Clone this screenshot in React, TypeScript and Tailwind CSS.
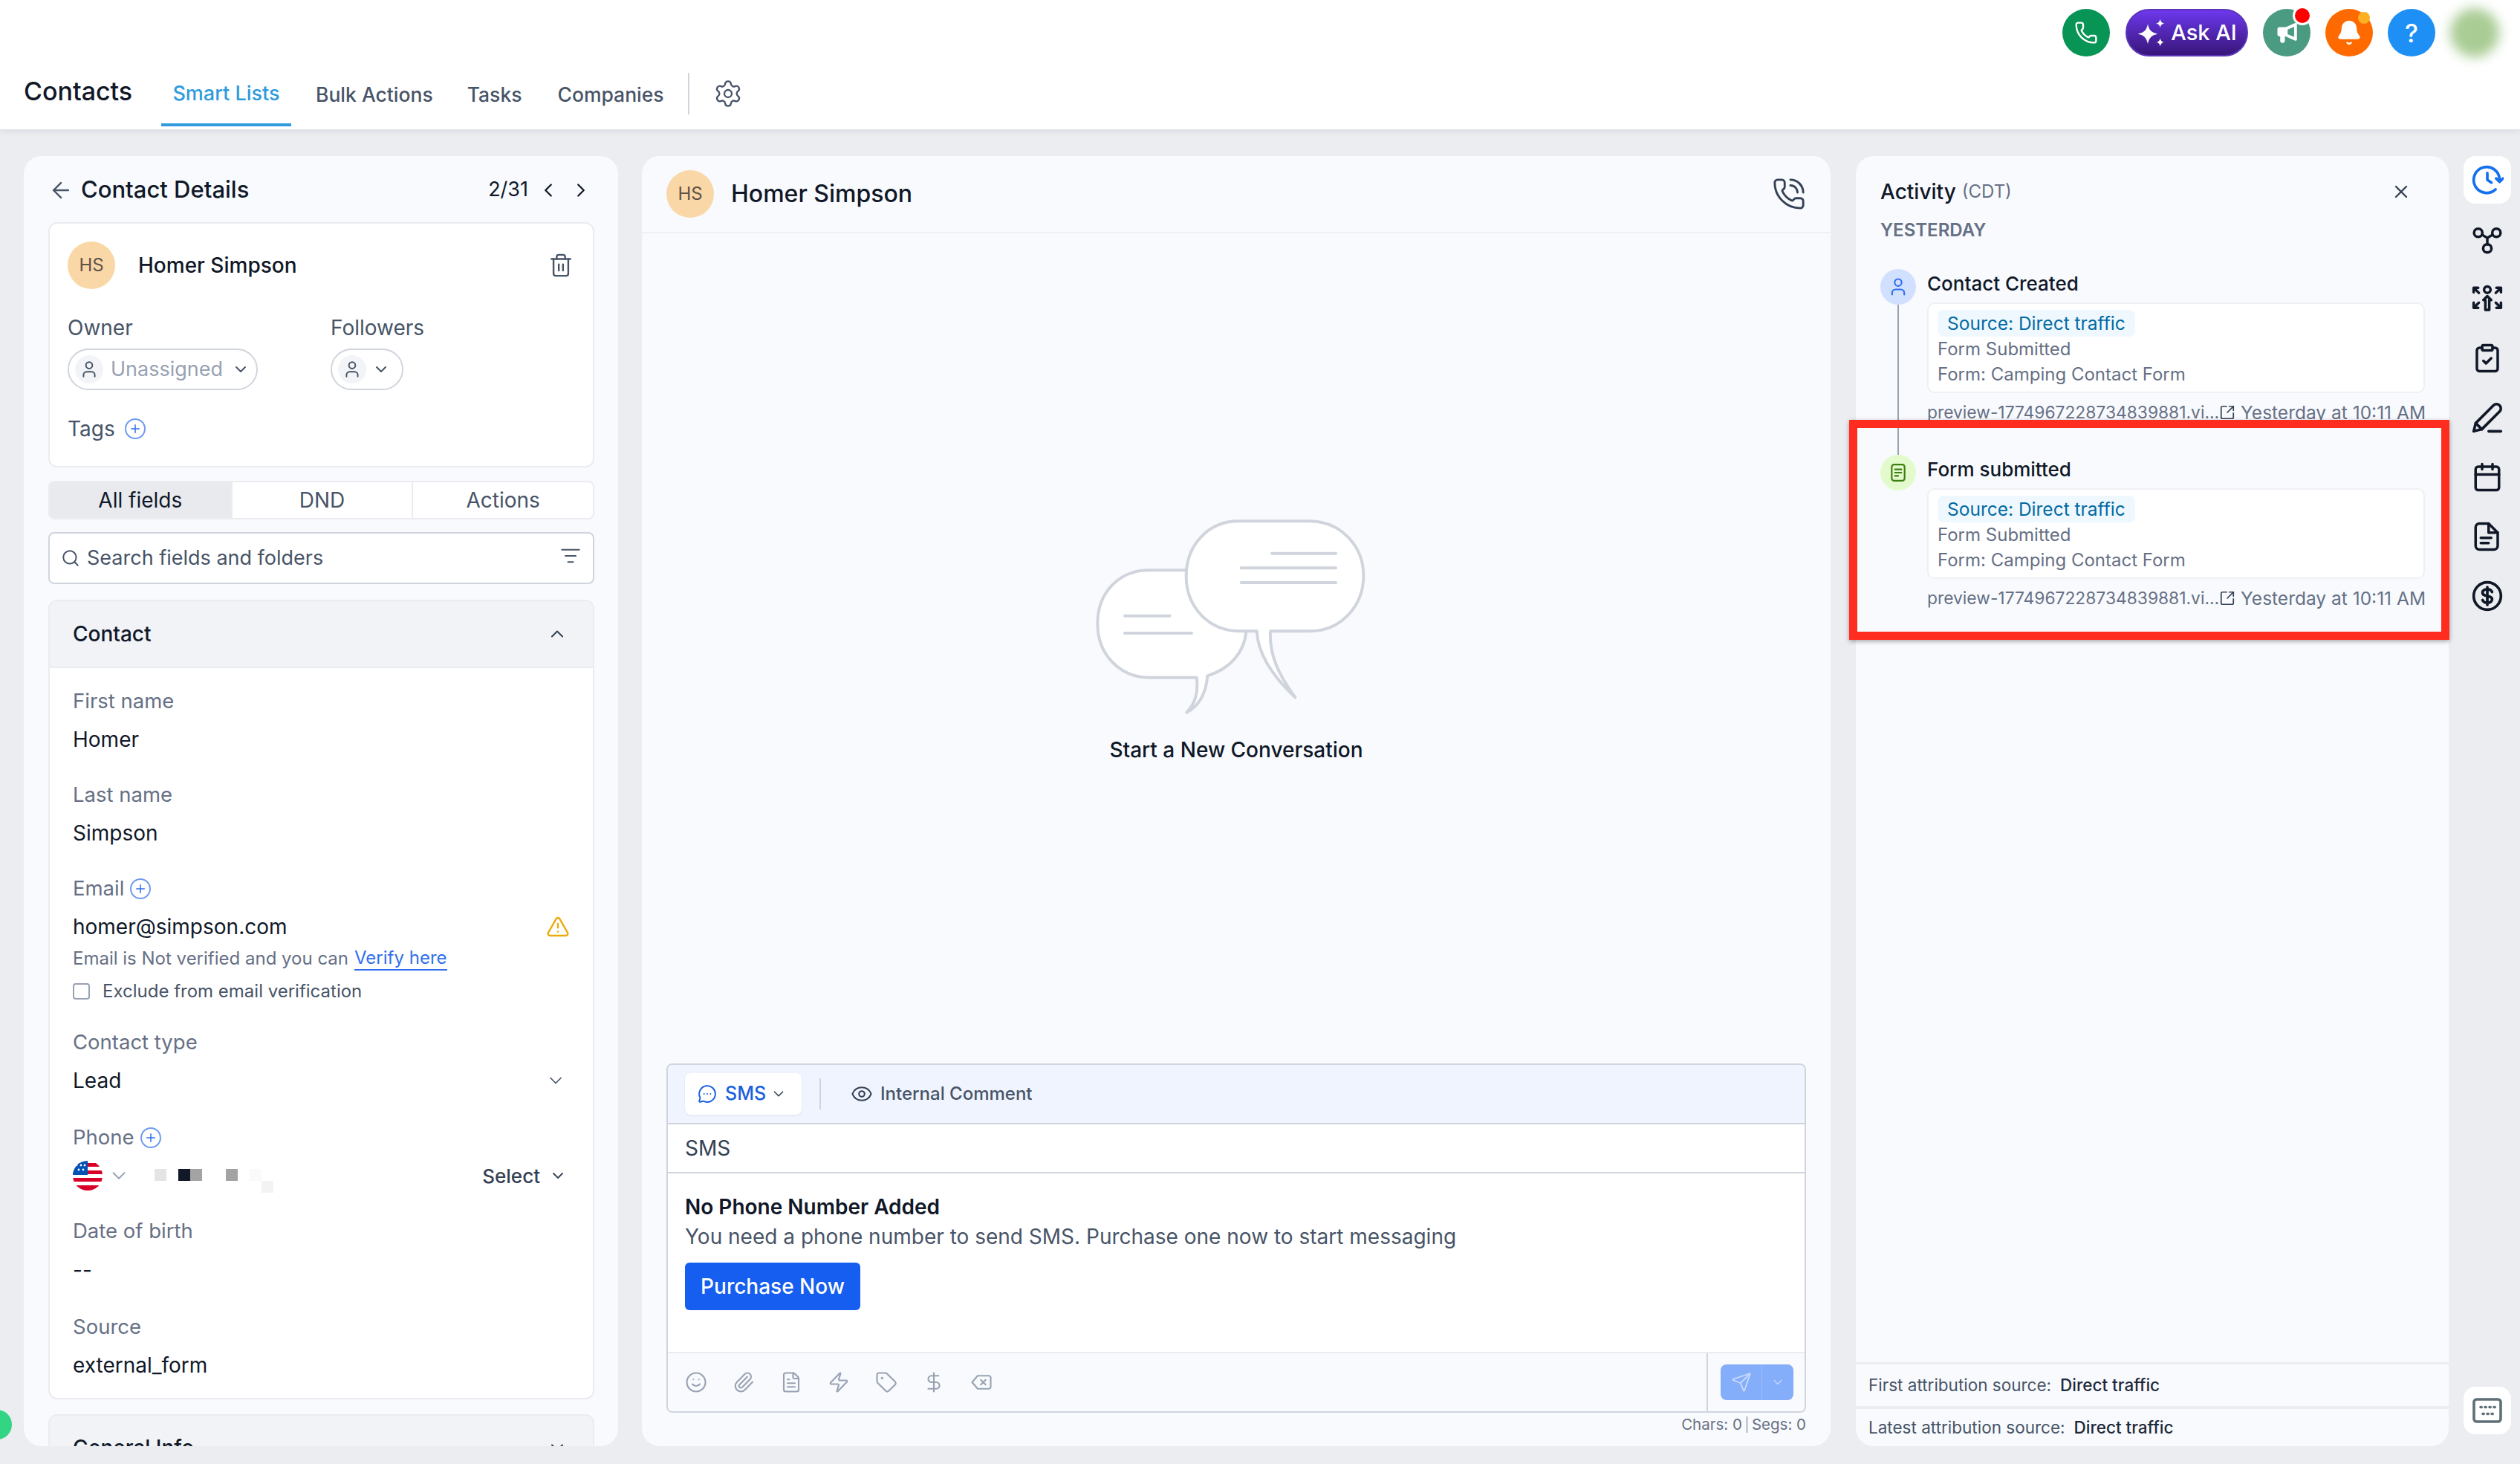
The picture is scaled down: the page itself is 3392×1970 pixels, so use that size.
import React from "react";
import {
  ArrowLeft,
  Bell,
  Calendar,
  ChevronDown,
  ChevronLeft,
  ChevronRight,
  ChevronUp,
  ClipboardCheck,
  DollarSign,
  Eye,
  FileText,
  ListFilter,
  MessageCircleMore,
  Paperclip,
  Phone,
  PhoneCall,
  Plus,
  Search,
  Send,
  Settings,
  Smile,
  SquareArrowOutUpRight,
  Tag,
  Trash2,
  TriangleAlert,
  User,
  X,
  Zap,
} from "lucide-react";

function PlusBadge() {
  return (
    <span className="flex h-[28px] w-[28px] items-center justify-center rounded-full border-2 border-[#6f9bf0] text-[#2f6fed]">
      <Plus size={18} strokeWidth={2} />
    </span>
  );
}

function Label({ children, className = "" }: { children: React.ReactNode; className?: string }) {
  return <div className={`flex h-[40px] items-center gap-[8px] text-[27.500px] text-[#667085] ${className}`}>{children}</div>;
}

function Value({ children, className = "" }: { children: React.ReactNode; className?: string }) {
  return <div className={`flex h-[40px] items-center text-[28px] text-[#101828] ${className}`}>{children}</div>;
}

function Activity({ icon, title, line }: { icon: React.ReactNode; title: string; line?: boolean }) {
  return (
    <div className="flex h-[250px] gap-[15px]">
      <div className="flex w-[48px] flex-col items-center">
        {icon}
        {line && <div className="w-[2px] flex-1 bg-[#98a2b3]" />}
      </div>
      <div className="w-[670px]">
        <div className="flex h-[38px] items-center text-[26px] font-medium text-[#101828]">{title}</div>
        <div className="mt-[7px] h-[122px] rounded-[10px] border-2 border-[#eef0f4] bg-white pl-[12px] pt-[8px] text-[24px] text-[#667085]">
          <div className="flex h-[36px] w-[266px] items-center rounded-[8px] bg-[#eff8ff] pl-[13px] text-[24.500px] text-[#026aa2]">Source: Direct traffic</div>
          <div className="flex h-[34px] items-center">Form Submitted</div>
          <div className="flex h-[34px] items-center">Form: Camping Contact Form</div>
        </div>
        <div className="mt-[6px] flex h-[40px] items-center justify-between whitespace-nowrap text-[#667085]">
          <span className="text-[22.800px]">preview-1774967228734839881.vi...</span>
          <span className="flex items-center gap-[7px] text-[24.500px]">
            <SquareArrowOutUpRight size={22} strokeWidth={1.9} className="text-[#344054]" />
            Yesterday at 10:11 AM
          </span>
        </div>
      </div>
    </div>
  );
}

function RailIcon({ children, active }: { children: React.ReactNode; active?: boolean }) {
  return (
    <div className={`flex h-[64px] w-[64px] items-center justify-center rounded-[16px] ${active ? "bg-white text-[#1570ef]" : "text-[#101828]"}`}>
      {children}
    </div>
  );
}

function UsFlag() {
  return (
    <svg width="40" height="40" viewBox="0 0 40 40">
      <defs>
        <clipPath id="flag">
          <circle cx="20" cy="20" r="20" />
        </clipPath>
      </defs>
      <g clipPath="url(#flag)">
        <rect width="40" height="40" fill="#fff" />
        <rect y="3" width="40" height="5" fill="#d80027" />
        <rect y="13" width="40" height="5" fill="#d80027" />
        <rect y="23" width="40" height="5" fill="#d80027" />
        <rect y="33" width="40" height="7" fill="#d80027" />
        <rect width="20" height="19" fill="#0052b4" />
        <circle cx="5" cy="6" r="1.4" fill="#fff" />
        <circle cx="11" cy="6" r="1.4" fill="#fff" />
        <circle cx="16" cy="6" r="1.4" fill="#fff" />
        <circle cx="8" cy="12" r="1.4" fill="#fff" />
        <circle cx="14" cy="12" r="1.4" fill="#fff" />
      </g>
    </svg>
  );
}

function ChatArt() {
  return (
    <svg width="500" height="340" viewBox="0 0 1500 1020" fill="none" className="mr-[28px]">
      <g stroke="#d0d5dd" strokeWidth="12" strokeLinecap="round" strokeLinejoin="round">
        <path
          d="M590 262H440C320 262 232 350 232 478C232 610 330 695 440 695H632C640 760 625 800 592 836C640 810 670 760 676 688C770 660 825 590 832 510"
          fill="#fff"
        />
        <path
          d="M800 64H1090C1210 64 1306 160 1306 285C1306 410 1210 508 1090 508H930C925 600 960 680 1030 775C950 700 880 610 875 508H810C680 508 590 410 590 285C590 160 680 64 800 64Z"
          fill="#fff"
        />
        <path d="M936 194H1194M812 253H1194M812 312H1194M342 446H524M342 516H612" />
      </g>
    </svg>
  );
}

export default function App() {
  return (
    <div className="relative h-[1970px] w-[3392px] overflow-hidden bg-[#ebedf1] font-['Inter',sans-serif]">
      {/* Header */}
      <div className="relative h-[174px] bg-white shadow-[0_3px_8px_rgba(16,24,40,0.08)]">
        <div className="flex h-[88px] items-center justify-end pr-[28px]">
          <div className="flex h-[64px] w-[64px] items-center justify-center rounded-full bg-[#079455] text-white">
            <Phone size={32} strokeWidth={1.8} />
          </div>
          <div className="ml-[21px] flex h-[64px] w-[165px] items-center justify-center gap-[6px] rounded-full border-2 border-[#5b34b8] bg-gradient-to-b from-[#6d38ee] to-[#38167a] text-[29px] font-medium text-white">
            <svg width="40" height="42" viewBox="0 0 24 24" fill="#fff">
              <path d="M9 5C10 10 12 12 17 13C12 14 10 16 9 21C8 16 6 14 1 13C6 12 8 10 9 5Z" />
              <path d="M19 1C19.5 3.2 20.4 4.1 22.5 4.5C20.4 5 19.5 5.800 19 8C18.500 5.800 17.600 5 15.500 4.500C17.600 4.100 18.500 3.200 19 1Z" />
              <path d="M19 16.500C19.500 18.500 20.300 19.300 22 19.700C20.300 20.200 19.500 21 19 23C18.500 21 17.700 20.200 16 19.700C17.700 19.300 18.500 18.500 19 16.500Z" />
            </svg>
            Ask AI
          </div>
          <div className="relative ml-[20px] flex h-[64px] w-[64px] items-center justify-center rounded-full bg-[#4b9a82] text-white">
            <svg width="30" height="30" viewBox="0 0 24 24" fill="#fff" fillRule="evenodd">
              <path d="M2 8C2 7 3 6 4 6H11L21 1.500C22 1 23 1.800 23 3V19C23 20.200 22 21 21 20.500L11 16H10V21C10 22 9 23 8 23H7C6 23 5 22 5 21V16H4C3 16 2 15 2 14ZM13 8.500V13.500L20 16.500V5.500Z" />
            </svg>
            <span className="absolute right-[-2px] top-[-4px] h-[26px] w-[26px] rounded-full border-[3px] border-white bg-[#f00]" />
          </div>
          <div className="relative ml-[20px] flex h-[64px] w-[64px] items-center justify-center rounded-full bg-[#ff6a00] text-white">
            <Bell size={36} fill="#fff" strokeWidth={1.6} />
            <span className="absolute right-[4px] top-[4px] h-[16px] w-[16px] rounded-full bg-[#fdb022]" />
          </div>
          <div className="ml-[20px] flex h-[64px] w-[64px] items-center justify-center rounded-full bg-[#1d8ff5] text-[34px] font-medium text-white">?</div>
          <div className="ml-[20px] h-[66px] w-[66px] rounded-full bg-[#a9cc94] blur-[8px]" />
        </div>
        <div className="flex h-[86px] items-start pl-[32px]">
          <div className="mt-[14px] w-[185px] text-[34px] font-medium leading-[42px] text-[#101828]">Contacts</div>
          <div className="flex h-[82px] w-[175px] justify-center border-b-4 border-[#2f9bdc] pt-[19px] text-[27px] font-medium leading-[38px] text-[#2f9bdc]">Smart Lists</div>
          <div className="ml-[33px] mt-[18px] text-[26.500px] font-medium leading-[42px] text-[#475467]">Bulk Actions</div>
          <div className="ml-[46px] mt-[18px] text-[26.500px] font-medium leading-[42px] text-[#475467]">Tasks</div>
          <div className="ml-[48px] mt-[18px] text-[26.500px] font-medium leading-[42px] text-[#475467]">Companies</div>
          <div className="ml-[32px] mt-[10px] h-[56px] w-[2px] bg-[#d0d5dd]" />
          <Settings size={40} strokeWidth={1.4} className="ml-[32px] mt-[18px] text-[#475467]" />
        </div>
      </div>

      {/* Panels */}
      <div className="flex pl-[32px] pt-[36px]">
        {/* Contact details */}
        <div className="h-[1736px] w-[800px] overflow-hidden rounded-[24px] bg-[#f8fafd] px-[33px]">
          <div className="flex h-[89px] items-center pt-[2px] text-[#101828]">
            <ArrowLeft size={34} strokeWidth={1.7} className="text-[#475467]" />
            <span className="ml-[10px] text-[31px] font-medium">Contact Details</span>
            <span className="ml-auto text-[27px]">2/31</span>
            <ChevronLeft size={30} strokeWidth={1.8} className="ml-[12px]" />
            <ChevronRight size={30} strokeWidth={1.8} className="ml-[14px] mr-[2px]" />
          </div>
          <div className="h-[330px] w-[735px] rounded-[12px] border-2 border-[#eaecf0] bg-white pl-[24px] pr-[26px] pt-[24px]">
            <div className="flex h-[64px] items-center">
              <div className="flex h-[64px] w-[64px] items-center justify-center rounded-full bg-[#fad7a6] text-[24px] text-[#5d5348]">HS</div>
              <span className="ml-[31px] text-[28px] font-medium text-[#101828]">Homer Simpson</span>
              <Trash2 size={34} strokeWidth={1.7} className="ml-auto text-[#475467]" />
            </div>
            <div className="mt-[32px] flex">
              <div className="w-[354px]">
                <div className="flex h-[40px] items-center text-[28px] text-[#475467]">Owner</div>
                <div className="mt-[8px] flex h-[56px] w-[256px] items-center rounded-full border-2 border-[#d0d5dd] pl-[8px]">
                  <span className="flex h-[38px] w-[38px] items-center justify-center rounded-full bg-[#f2f4f7]">
                    <User size={26} strokeWidth={1.8} className="text-[#475467]" />
                  </span>
                  <span className="ml-[10px] text-[27px] text-[#98a2b3]">Unassigned</span>
                  <ChevronDown size={24} strokeWidth={2} className="ml-[12px] text-[#475467]" />
                </div>
              </div>
              <div>
                <div className="flex h-[40px] items-center text-[28px] text-[#475467]">Followers</div>
                <div className="mt-[8px] flex h-[56px] w-[98px] items-center rounded-full border-2 border-[#d0d5dd] pl-[8px]">
                  <span className="flex h-[38px] w-[38px] items-center justify-center rounded-full bg-[#f2f4f7]">
                    <User size={26} strokeWidth={1.8} className="text-[#475467]" />
                  </span>
                  <ChevronDown size={24} strokeWidth={2} className="ml-[8px] text-[#475467]" />
                </div>
              </div>
            </div>
            <div className="mt-[32px] flex h-[40px] items-center gap-[13px] text-[28px] text-[#475467]">
              Tags <PlusBadge />
            </div>
          </div>

          <div className="mt-[18px] grid h-[52px] w-[735px] grid-cols-3 overflow-hidden rounded-[8px] border-2 border-[#eaecf0] bg-white text-center text-[28px] font-normal leading-[48px] text-[#475467]">
            <div className="bg-[#e8eaee] text-[#101828]">All fields</div>
            <div className="border-l-2 border-[#eaecf0]">DND</div>
            <div className="border-l-2 border-[#eaecf0]">Actions</div>
          </div>

          <div className="mt-[17px] flex h-[70px] w-[735px] items-center rounded-[8px] border-2 border-[#d0d5dd] bg-white pl-[15px] pr-[16px] text-[27px] text-[#475467]">
            <Search size={26} strokeWidth={1.8} />
            <span className="ml-[9px]">Search fields and folders</span>
            <ListFilter size={28} strokeWidth={1.7} className="ml-auto mb-[6px]" />
          </div>

          <div className="mt-[21px] h-[1076px] w-[735px] overflow-hidden rounded-[12px] border-2 border-[#eaecf0] bg-white">
            <div className="flex h-[90px] items-center justify-between border-b-2 border-[#eaecf0] bg-[#f1f3f7] pl-[31px] pr-[34px] text-[28px] font-medium text-[#101828]">
              Contact
              <ChevronUp size={28} strokeWidth={1.8} className="text-[#344054]" />
            </div>
            <div className="px-[31px] pt-[25px]">
              <Label>First name</Label>
              <Value className="mt-[11px]">Homer</Value>
              <Label className="mt-[35px]">Last name</Label>
              <Value className="mt-[11px]">Simpson</Value>
              <Label className="mt-[35px]">
                Email <PlusBadge />
              </Label>
              <Value className="mt-[11px] justify-between">
                homer@simpson.com
                <TriangleAlert size={32} strokeWidth={1.8} className="text-[#eaaa08]" />
              </Value>
              <div className="mt-[3px] flex h-[40px] items-center text-[24px] text-[#667085]">
                Email is Not verified and you can
                <span className="ml-[8px] border-b-2 border-[#2f6fed] leading-[30px] text-[#2f6fed]">Verify here</span>
              </div>
              <div className="mt-[4px] flex h-[40px] items-center text-[24px] text-[#475467]">
                <span className="h-[22px] w-[23px] rounded-[4px] border-2 border-[#98a2b3] bg-white" />
                <span className="ml-[17px]">Exclude from email verification</span>
              </div>
              <Label className="mt-[29px]">Contact type</Label>
              <Value className="mt-[11px] justify-between">
                Lead
                <ChevronDown size={28} strokeWidth={1.5} className="mr-[5px] text-[#475467]" />
              </Value>
              <Label className="mt-[37px]">
                Phone <PlusBadge />
              </Label>
              <div className="mt-[11px] flex h-[40px] items-center text-[26px] text-[#344054]">
                <UsFlag />
                <ChevronDown size={30} strokeWidth={1.5} className="ml-[7px] text-[#98a2b3]" />
                <svg width="176" height="44" viewBox="0 0 176 44" className="ml-[33px] mt-[4px]">
                  <rect x="0" y="11" width="16" height="16" fill="#e4e4e7" />
                  <rect x="32" y="11" width="16" height="16" fill="#111827" />
                  <rect x="48" y="11" width="16" height="16" fill="#a3a3a3" />
                  <rect x="96" y="11" width="16" height="16" fill="#a3a3a3" />
                  <rect x="128" y="11" width="16" height="16" fill="#fafafa" />
                  <rect x="144" y="27" width="16" height="16" fill="#f3f3f3" />
                </svg>
                <span className="ml-auto font-medium">Select</span>
                <ChevronDown size={24} strokeWidth={1.8} className="ml-[12px] mr-[4px]" />
              </div>
              <Label className="mt-[35px]">Date of birth</Label>
              <Value className="mt-[12px]">--</Value>
              <Label className="mt-[37px]">Source</Label>
              <Value className="mt-[11px]">external_form</Value>
            </div>
          </div>

          <div className="mt-[20px] flex h-[90px] w-[735px] items-center justify-between rounded-[12px] border-2 border-[#eaecf0] bg-[#f1f3f7] pl-[31px] pr-[34px] text-[28px] font-medium text-[#101828]">
            General Info
            <ChevronDown size={28} strokeWidth={1.8} className="text-[#344054]" />
          </div>
        </div>

        {/* Conversation */}
        <div className="ml-[32px] flex h-[1736px] w-[1600px] flex-col rounded-[24px] bg-[#f8fafd]">
          <div className="flex h-[104px] items-center border-b-2 border-[#eef0f4] pl-[33px] pr-[33px]">
            <div className="flex h-[64px] w-[64px] items-center justify-center rounded-full bg-[#fad7a6] text-[24px] text-[#5d5348]">HS</div>
            <span className="ml-[23px] text-[32px] font-medium text-[#101828]">Homer Simpson</span>
            <PhoneCall size={46} strokeWidth={1.5} className="ml-auto text-[#344054]" />
          </div>
          <div className="flex flex-1 flex-col items-center pt-[366px]">
            <ChatArt />
            <div className="mt-[-31px] text-[28px] font-medium leading-[40px] text-[#101828]">Start a New Conversation</div>
          </div>
          <div className="ml-[33px] h-[470px] w-[1534px] overflow-hidden rounded-[8px] border-2 border-[#d0d5dd]">
            <div className="flex h-[80px] items-center border-b-2 border-[#d0d5dd] bg-[#eff4fe] pl-[23px]">
              <div className="flex h-[56px] w-[157px] items-center rounded-[8px] bg-white pl-[17px] text-[25px] font-medium text-[#1b5fe0] shadow-[0_1px_3px_rgba(16,24,40,0.08)]">
                <MessageCircleMore size={26} strokeWidth={1.8} />
                <span className="ml-[11px]">SMS</span>
                <ChevronDown size={22} strokeWidth={1.8} className="ml-[6px] text-[#344054]" />
              </div>
              <div className="ml-[24px] h-[42px] w-[2px] bg-[#d0d5dd]" />
              <Eye size={30} strokeWidth={1.7} className="ml-[40px] text-[#344054]" />
              <span className="ml-[10px] text-[24px] font-medium text-[#475467]">Internal Comment</span>
            </div>
            <div className="flex h-[66px] items-center border-b-2 border-[#d0d5dd] bg-white pl-[23px] text-[28px] text-[#344054]">SMS</div>
            <div className="h-[242px] border-b-2 border-[#eaecf0] bg-white pl-[23px] pt-[25px]">
              <div className="text-[28px] font-semibold leading-[40px] text-[#101828]">No Phone Number Added</div>
              <div className="text-[28px] leading-[40px] text-[#475467]">You need a phone number to send SMS. Purchase one now to start messaging</div>
              <div className="mt-[15px] flex h-[64px] w-[236px] items-center justify-center rounded-[6px] bg-[#155eef] text-[28px] font-medium text-white">Purchase Now</div>
            </div>
            <div className="flex h-[78px] items-center bg-[#f8fafd] pl-[23px] text-[#98a2b3]">
              <div className="flex gap-[34px]">
                <Smile size={30} strokeWidth={1.7} />
                <Paperclip size={30} strokeWidth={1.7} />
                <FileText size={30} strokeWidth={1.7} />
                <Zap size={30} strokeWidth={1.7} />
                <Tag size={30} strokeWidth={1.7} />
                <DollarSign size={30} strokeWidth={1.7} />
                <svg width="30" height="30" viewBox="0 0 24 24" fill="none" stroke="currentColor" strokeWidth="1.7" strokeLinejoin="round">
                  <path d="M8 5H20C21 5 22 6 22 7V17C22 18 21 19 20 19H8L2 12Z" />
                  <path d="M11 9L17 15M17 9L11 15" />
                </svg>
              </div>
              <div className="ml-auto flex h-full w-[132px] items-center border-l-2 border-[#d0d5dd] pl-[17px]">
                <div className="flex h-[48px] w-[98px] items-center rounded-[8px] bg-[#84adfa] text-white">
                  <span className="flex h-full w-[56px] items-center justify-center border-r border-[#9dbefb]">
                    <Send size={28} strokeWidth={1.6} className="text-[#c6d9fd]" />
                  </span>
                  <ChevronDown size={20} strokeWidth={1.6} className="ml-[11px] text-[#c6d9fd]" />
                </div>
              </div>
            </div>
          </div>
          <div className="mb-[13px] mr-[33px] flex h-[32px] items-center justify-end text-[20.500px] text-[#667085]">
            Chars: 0 <span className="mx-[6px] h-[22px] w-[1px] bg-[#667085]" /> Segs: 0
          </div>
        </div>

        {/* Activity */}
        <div className="ml-[34px] flex h-[1736px] w-[798px] flex-col rounded-[24px] bg-[#f8fafd]">
          <div className="pl-[33px]">
            <div className="flex h-[96px] items-center pr-[50px]">
              <span className="text-[28px] font-medium text-[#101828]">Activity</span>
              <span className="ml-[8px] text-[24px] text-[#667085]">(CDT)</span>
              <X size={28} strokeWidth={2} className="ml-auto text-[#344054]" />
            </div>
            <div className="flex h-[8px] items-center text-[24px] font-semibold text-[#667085]">YESTERDAY</div>
            <div className="mt-[48px]">
              <Activity
                title="Contact Created"
                line
                icon={
                  <span className="flex h-[48px] w-[48px] items-center justify-center rounded-full bg-[#d1e0ff] text-[#2f6fed]">
                    <User size={28} strokeWidth={1.8} />
                  </span>
                }
              />
              <Activity
                title="Form submitted"
                icon={
                  <span className="flex h-[48px] w-[48px] items-center justify-center rounded-full bg-[#e3fbcc] text-[#3f7d12]">
                    <svg width="26" height="26" viewBox="0 0 24 24" fill="none" stroke="currentColor" strokeWidth="2" strokeLinecap="round">
                      <rect x="4" y="2" width="16" height="20" rx="3" />
                      <path d="M8 8H16M8 12H16M8 16H12" />
                    </svg>
                  </span>
                }
              />
            </div>
          </div>
          <div className="mt-auto flex h-[59px] items-center border-t-[3px] border-[#ebedf1] pl-[17px] text-[22.500px] text-[#475467]">
            First attribution source:
            <span className="ml-[12px] font-medium text-[#1d2939]">Direct traffic</span>
          </div>
          <div className="flex h-[54px] items-center border-t-[4px] border-[#ebedf1] pl-[17px] text-[22.500px] text-[#475467]">
            Latest attribution source:
            <span className="ml-[12px] font-medium text-[#1d2939]">Direct traffic</span>
          </div>
        </div>

        {/* Right rail */}
        <div className="ml-[20px] flex h-[1736px] flex-col gap-[16px]">
          <RailIcon active>
            <svg width="44" height="44" viewBox="0 0 24 24" fill="none" stroke="currentColor" strokeWidth="2" strokeLinecap="round" strokeLinejoin="round">
              <path d="M21 12A9.500 9.500 0 1 0 18 19" />
              <path d="M12 7V12L15 14" />
              <path d="M18.500 11L21 13.500L23.500 11" />
            </svg>
          </RailIcon>
          <RailIcon>
            <svg width="42" height="42" viewBox="0 0 24 24" fill="none" stroke="currentColor" strokeWidth="2" strokeLinecap="round">
              <circle cx="5" cy="7" r="3.200" />
              <circle cx="19" cy="7" r="3.200" />
              <circle cx="12" cy="19" r="3.200" />
              <path d="M8 8.500L12 11L16 8.500M12 11V16" />
            </svg>
          </RailIcon>
          <RailIcon>
            <svg width="42" height="42" viewBox="0 0 24 24" fill="none" stroke="currentColor" strokeWidth="2" strokeLinecap="round" strokeLinejoin="round">
              <circle cx="12" cy="5" r="2.500" />
              <path d="M9 13L12 10L15 13H13.500V20.500H10.500V13Z" />
              <path d="M1.500 7V3.500H5M2 4L5.500 7.500M22.500 7V3.500H19M22 4L18.500 7.500M1.500 15V19H5M2 18.500L5.500 15M22.500 15V19H19M22 18.500L18.500 15" />
            </svg>
          </RailIcon>
          <RailIcon>
            <ClipboardCheck size={42} strokeWidth={2} />
          </RailIcon>
          <RailIcon>
            <svg width="44" height="44" viewBox="0 0 24 24" fill="none" stroke="currentColor" strokeWidth="2" strokeLinecap="round" strokeLinejoin="round">
              <path d="M2 22L3.500 16L16.500 3C17.800 1.800 19.700 1.800 21 3C22.200 4.300 22.200 6.200 21 7.500L8 20.500Z" />
              <path d="M3.500 16L8 20.500M13 22H22" />
            </svg>
          </RailIcon>
          <RailIcon>
            <Calendar size={42} strokeWidth={2} />
          </RailIcon>
          <RailIcon>
            <svg width="42" height="42" viewBox="0 0 24 24" fill="none" stroke="currentColor" strokeWidth="2" strokeLinecap="round" strokeLinejoin="round">
              <path d="M6 2H13L20 9V19C20 20.700 18.700 22 17 22H6C4.300 22 3 20.700 3 19V5C3 3.300 4.300 2 6 2Z" />
              <path d="M13 2V9H20M7 13H15M7 17H13" />
            </svg>
          </RailIcon>
          <RailIcon>
            <svg width="44" height="44" viewBox="0 0 24 24" fill="none" stroke="currentColor" strokeWidth="2" strokeLinecap="round">
              <circle cx="12" cy="12" r="10" />
              <path d="M15.500 9C15 7.800 13.800 7 12 7C10 7 8.500 8 8.500 9.500C8.500 13 15.500 11 15.500 14.500C15.500 16 14 17 12 17C10.200 17 9 16.200 8.500 15M12 5.500V18.500" />
            </svg>
          </RailIcon>
          <div className="mt-auto mb-[16px] flex h-[64px] w-[64px] items-center justify-center rounded-[16px] bg-white text-[#5f6f78]">
            <svg width="42" height="36" viewBox="0 0 28 24" fill="none" stroke="currentColor" strokeWidth="2.400">
              <rect x="2" y="2" width="24" height="20" rx="2.500" />
              <path d="M8 9H8.800M12 9H12.800M16 9H16.800M20 9H20.800M10 15H10.800M14 15H14.800M18 15H18.800" strokeLinecap="round" />
            </svg>
          </div>
        </div>
      </div>

      {/* Overlays */}
      <div className="absolute left-[-24px] top-[1897px] h-[40px] w-[40px] rounded-full bg-[#32d583]" />
      <div className="absolute left-[2489px] top-[565px] h-[296px] w-[808px] border-[11px] border-[#ff2d20] shadow-[0_2px_6px_rgba(0,0,0,0.35)]" />
    </div>
  );
}
